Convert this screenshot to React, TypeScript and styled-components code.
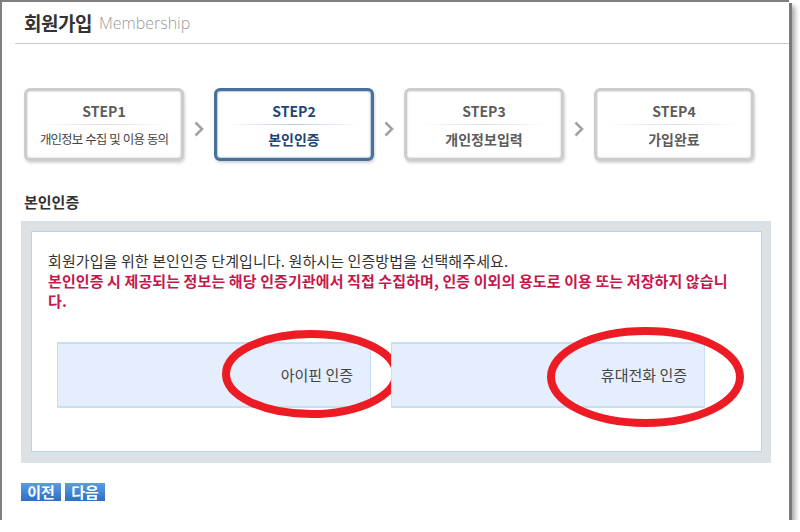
import styled, { createGlobalStyle } from "styled-components";

const GlobalStyle = createGlobalStyle`
  html, body { margin: 0; padding: 0; background: #fff; }
  body { font-family: "Noto Sans CJK KR", "Noto Sans", sans-serif; }
`;

const Frame = styled.div`
  width: 787px;
  height: 518px;
  border-top: 2px solid #7f7f7f;
  border-left: 2px solid #7f7f7f;
  background: #fff;
  box-shadow: 3px 3px 0 #7a7a7a, 6px 6px 5px rgba(0, 0, 0, 0.35);
`;

const Header = styled.div`
  height: 41px;
  margin-left: 13px;
  padding-left: 9px;
  border-bottom: 1px solid #cccccc;
  display: flex;
  align-items: center;
  gap: 7px;
`;

const Title = styled.h1`
  margin: 0;
  font-size: 19px;
  font-weight: 700;
  color: #333;
  letter-spacing: -0.5px;
`;

const SubTitle = styled.span`
  font-family: "Open Sans", "Noto Sans", sans-serif;
  font-weight: 300;
  font-size: 16px;
  color: #9a9a9a;
`;

const Steps = styled.div`
  display: flex;
  align-items: center;
  margin-top: 44px;
  padding-left: 22px;
`;

const StepBox = styled.div<{ $active?: boolean }>`
  box-sizing: border-box;
  width: 160px;
  height: 73px;
  border-radius: 6px;
  border: 3px solid ${(p) => (p.$active ? "#47709b" : "#cdcdcd")};
  background: #fff;
  box-shadow: 1px 2px 3px rgba(0, 0, 0, 0.18),
    inset 0 0 2px ${(p) => (p.$active ? "#2d5784" : "#b5b5b5")};
  display: flex;
  flex-direction: column;
  align-items: center;
  padding-top: 11px;
  color: ${(p) => (p.$active ? "#1b4677" : "#5c5c5c")};
`;

const StepNo = styled.div`
  font-size: 14px;
  font-weight: 700;
  line-height: 18px;
`;

const StepLine = styled.div<{ $active?: boolean }>`
  width: 132px;
  height: 1px;
  margin: 4px 0 3px;
  background: linear-gradient(
    to right,
    rgba(0, 0, 0, 0),
    ${(p) => (p.$active ? "#b9c9dc" : "#dddddd")},
    rgba(0, 0, 0, 0)
  );
`;

const StepName = styled.div<{ $small?: boolean }>`
  font-size: ${(p) => (p.$small ? "12.5px" : "14px")};
  font-weight: ${(p) => (p.$small ? 400 : 700)};
  line-height: 22px;
  letter-spacing: ${(p) => (p.$small ? "-0.9px" : "0")};
  word-spacing: ${(p) => (p.$small ? "1px" : "0")};
  color: ${(p) => (p.$small ? "#444" : "inherit")};
`;

const Arrow = styled.div`
  width: 30px;
  display: flex;
  justify-content: center;
  padding-top: 9px;
`;

const SectionTitle = styled.h2`
  margin: 31px 0 0 22px;
  font-size: 15px;
  font-weight: 700;
  line-height: 20px;
  color: #333;
`;

const Panel = styled.div`
  width: 750px;
  box-sizing: border-box;
  margin: 9px 0 0 19px;
  padding: 10px 9px 11px 10px;
  background: #dce1e6;
`;

const Inner = styled.div`
  box-sizing: border-box;
  height: 221px;
  border: 1px solid #b5d5ec;
  background: #fff;
  padding: 19px 24px 0 16px;
`;

const Notice = styled.p`
  margin: 0;
  font-size: 15px;
  line-height: 20px;
  color: #333;
  letter-spacing: 0.1px;
`;

const Warn = styled.span`
  display: block;
  color: #c7174c;
  font-weight: 700;
`;

const Methods = styled.div`
  display: flex;
  gap: 20px;
  margin: 31px 0 0 9px;
`;

const Method = styled.button`
  position: relative;
  box-sizing: border-box;
  width: 314px;
  height: 66px;
  border: 1px solid #c6dff1;
  border-width: 2px 1px;
  background: #e4eefc;
  font-family: inherit;
  font-size: 15px;
  color: #444;
  text-align: right;
  padding: 0 17px 2px 0;
  cursor: pointer;
`;

const Mark = styled.svg`
  position: absolute;
  pointer-events: none;
  overflow: visible;
`;

const Buttons = styled.div`
  display: flex;
  gap: 4px;
  margin: 20px 0 0 19px;
`;

const NavButton = styled.button`
  width: 40px;
  height: 18px;
  border: none;
  padding: 0;
  background: linear-gradient(#5b9be3, #2f6fc4);
  color: #fff;
  font-family: inherit;
  font-size: 15px;
  font-weight: 700;
  line-height: 18px;
  cursor: pointer;
`;

const steps = [
  { no: "STEP1", name: "개인정보 수집 및 이용 동의", small: true },
  { no: "STEP2", name: "본인인증", active: true },
  { no: "STEP3", name: "개인정보입력" },
  { no: "STEP4", name: "가입완료" },
];

function Chevron() {
  return (
    <svg width="10" height="16" viewBox="0 0 10 16">
      <path d="M1.5 1.5 L8 8 L1.5 14.5" fill="none" stroke="#a2a2a2" strokeWidth="2.6" />
    </svg>
  );
}

function Ring({ left, top, w, h }: { left: number; top: number; w: number; h: number }) {
  return (
    <Mark style={{ left, top }} width={w} height={h} viewBox={`0 0 ${w} ${h}`}>
      <ellipse cx={w / 2} cy={h / 2} rx={w / 2 - 4} ry={h / 2 - 4} fill="none" stroke="#ed1c24" strokeWidth="8" />
    </Mark>
  );
}

export default function App() {
  return (
    <>
      <GlobalStyle />
      <Frame>
        <Header>
          <Title>회원가입</Title>
          <SubTitle>Membership</SubTitle>
        </Header>

        <Steps>
          {steps.map((s, i) => (
            <div key={s.no} style={{ display: "contents" }}>
              {i > 0 && (
                <Arrow>
                  <Chevron />
                </Arrow>
              )}
              <StepBox $active={s.active}>
                <StepNo>{s.no}</StepNo>
                <StepLine $active={s.active} />
                <StepName $small={s.small}>{s.name}</StepName>
              </StepBox>
            </div>
          ))}
        </Steps>

        <SectionTitle>본인인증</SectionTitle>
        <Panel>
          <Inner>
            <Notice>
              회원가입을 위한 본인인증 단계입니다. 원하시는 인증방법을 선택해주세요.
              <Warn>
                본인인증 시 제공되는 정보는 해당 인증기관에서 직접 수집하며, 인증 이외의 용도로 이용 또는 저장하지 않습니다.
              </Warn>
            </Notice>
            <Methods>
              <Method>
                아이핀 인증
                <Ring left={164} top={-14} w={178} h={88} />
              </Method>
              <Method>
                휴대전화 인증
                <Ring left={155} top={-17} w={197} h={100} />
              </Method>
            </Methods>
          </Inner>
        </Panel>

        <Buttons>
          <NavButton>이전</NavButton>
          <NavButton>다음</NavButton>
        </Buttons>
      </Frame>
    </>
  );
}
